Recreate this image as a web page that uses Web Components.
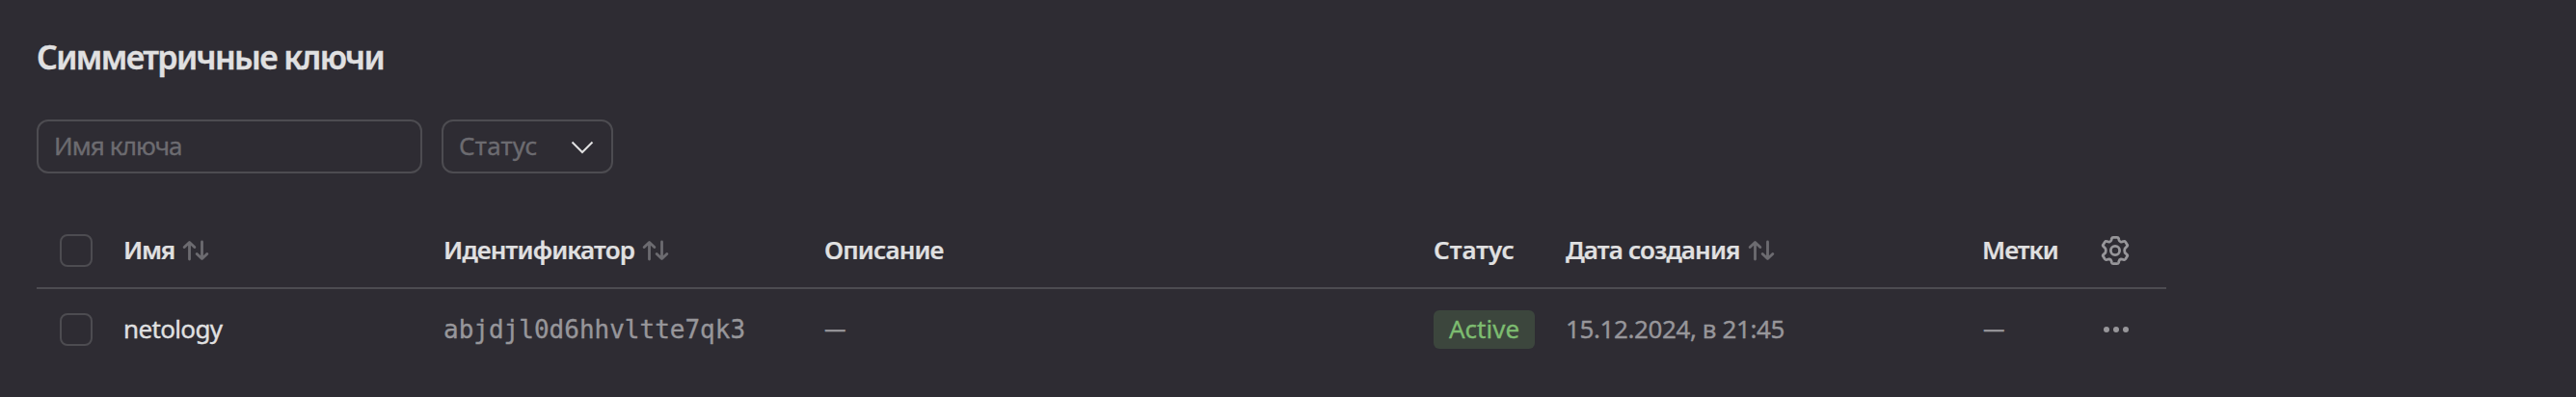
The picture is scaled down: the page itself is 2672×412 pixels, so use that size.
<!DOCTYPE html>
<html lang="ru"><head><meta charset="utf-8"><title>Симметричные ключи</title>
<style>html,body{margin:0;background:#2e2c33}</style></head><body>
<keys-page></keys-page>
<script>
const define=(name,html)=>customElements.define(name,class extends HTMLElement{
  constructor(){super();this.attachShadow({mode:'open'}).innerHTML=html}
});
define('key-check','<style>:host{display:block;box-sizing:border-box;width:34px;height:34px;border:2px solid #4d4c51;border-radius:8px}</style>');
define('sort-icon','<style>:host{display:block;width:28px;height:24px;margin-left:8px}svg{display:block}</style><svg width="28" height="24" viewBox="0 0 28 24" fill="none" stroke="#6c6b70" stroke-width="2.8" stroke-linecap="round" stroke-linejoin="round"><path d="M7.500 21V3.600M2.200 8.600l5.300-5.200 5.300 5.200M20.500 3v17.400M15.200 15.400l5.300 5.200 5.300-5.200"/></svg>');
define('gear-icon','<style>:host{display:block;width:32px;height:32px;margin-left:-1px}svg{display:block}</style><svg width="32" height="32" viewBox="0 0 32 32" fill="none" stroke="#97969a" stroke-width="2.8" stroke-linejoin="round"><circle cx="16" cy="16" r="4.6"/><path vector-effect="non-scaling-stroke" transform="matrix(1.11 0 0 1 -1.760 0)" d="M14.300 2.400h3.400q1.300 0 1.600 1.300l.2 1.300q.4 1.700 1.900 2.100l1.200-.2 1.200-.4q1.200-.4 1.900.7l1.500 2.700q.7 1.100-.3 2l-1 .9q-1.200 1-1.200 3.200t1.200 3.200l1 .9q1 .9.3 2l-1.500 2.700q-.7 1.100-1.900.7l-1.200-.4-1.200-.2q-1.500.4-1.900 2.100l-.2 1.300q-.3 1.300-1.600 1.300h-3.400q-1.300 0-1.600-1.300l-.2-1.300q-.4-1.700-1.900-2.100l-1.200.2-1.200.4q-1.200.4-1.900-.7l-1.500-2.700q-.7-1.100.3-2l1-.9q1.200-1 1.200-3.200t-1.200-3.200l-1-.9q-1-.9-.3-2l1.500-2.700q.7-1.100 1.900-.7l1.200.4 1.200.2q1.500-.4 1.900-2.100l.2-1.300q.3-1.300 1.600-1.300z"/></svg>');
define('more-icon','<style>:host{display:block;width:32px;height:32px}svg{display:block}</style><svg width="32" height="32" fill="#97969a"><circle cx="6" cy="16" r="3"/><circle cx="16" cy="16" r="3"/><circle cx="26" cy="16" r="3"/></svg>');
define('key-field','<style>:host{display:flex;box-sizing:border-box;align-items:center;justify-content:space-between;height:56px;border:2px solid #4d4c51;border-radius:12px;padding:0 18px 0 16px;color:#6c6b70}</style><slot></slot><slot name="end"></slot>');
define('chevron-icon','<style>:host{display:block;width:24px;height:14px;margin-top:2px}svg{display:block}</style><svg width="24" height="14" fill="none" stroke="#e0e0e1" stroke-width="2"><path d="M1.500 1.500 12 12 22.500 1.500"/></svg>');
define('status-label','<style>:host{display:flex;align-items:center;box-sizing:border-box;height:40px;padding:0 16px;width:105px;border-radius:6px;background:#3c463d;color:#7dbc70}</style><slot></slot>');
define('key-row','<style>:host{display:grid;grid-template-columns:89px 333px 394px 633px 136px 433px 123px 68px;box-sizing:border-box;align-items:center;color:#97969a}:host([head]){color:#e0e0e1;font-weight:600;border-bottom:2px solid #4d4c51;-webkit-text-stroke-width:.2px}::slotted(*){display:flex;align-items:center;white-space:nowrap}</style><slot></slot>');
define('text-line','<style>:host{display:block;white-space:nowrap;padding-bottom:2px}</style><slot></slot>');
define('keys-page',`<style>
:host{display:block;box-sizing:border-box;width:2672px;height:412px;padding:35px 38px 0;background:#2e2c33;font:26px/36px "Noto Sans",sans-serif;overflow:hidden;-webkit-text-stroke-width:.35px}
h1{margin:0;font-size:34px;line-height:48px;font-weight:600;color:#e0e0e1;letter-spacing:-1.62px}
.filters{display:flex;gap:20px;margin-top:39px}
.name{width:400px;letter-spacing:-.9px}.status{width:178px;letter-spacing:.2px}
.table{width:2209px;margin-top:42px}
.head{height:78px}.row{height:84px}
.check{padding-left:24px}.in{padding-left:1px}
.mono{font-family:"DejaVu Sans Mono",monospace;padding-top:2px}
.main{color:#e0e0e1;letter-spacing:-.65px}
.n{letter-spacing:-1.3px}.h{letter-spacing:-.85px}.m{letter-spacing:-1px}
.date{letter-spacing:-.4px;padding-left:1px}.dash{font-size:22.5px;padding-left:1px}
</style>
<h1><text-line>Симметричные ключи</text-line></h1>
<div class="filters"><key-field class="name"><text-line>Имя ключа</text-line></key-field><key-field class="status"><text-line>Статус</text-line><chevron-icon slot="end"></chevron-icon></key-field></div>
<div class="table">
<key-row head class="head"><div class="check"><key-check></key-check></div><div class="in n"><text-line>Имя</text-line><sort-icon></sort-icon></div><div class="h"><text-line>Идентификатор</text-line><sort-icon></sort-icon></div><div class="in h"><text-line>Описание</text-line></div><div><text-line>Статус</text-line></div><div class="in h"><text-line>Дата создания</text-line><sort-icon></sort-icon></div><div class="m"><text-line>Метки</text-line></div><div><gear-icon></gear-icon></div></key-row>
<key-row class="row"><div class="check"><key-check></key-check></div><div class="in main"><text-line>netology</text-line></div><div class="mono"><text-line>abjdjl0d6hhvltte7qk3</text-line></div><div class="dash"><text-line>—</text-line></div><div><status-label><text-line>Active</text-line></status-label></div><div class="date"><text-line>15.12.2024, в 21:45</text-line></div><div class="dash"><text-line>—</text-line></div><div><more-icon></more-icon></div></key-row>
</div>`);
</script></body></html>
